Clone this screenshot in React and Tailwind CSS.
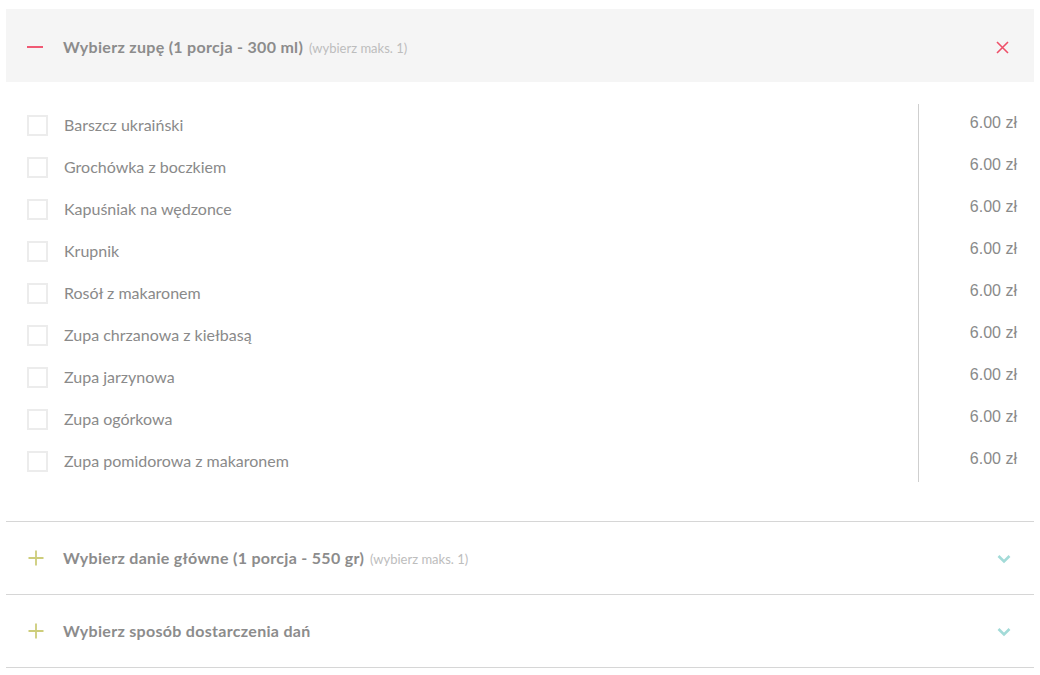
import React from "react";

const soups = [
  "Barszcz ukraiński",
  "Grochówka z boczkiem",
  "Kapuśniak na wędzonce",
  "Krupnik",
  "Rosół z makaronem",
  "Zupa chrzanowa z kiełbasą",
  "Zupa jarzynowa",
  "Zupa ogórkowa",
  "Zupa pomidorowa z makaronem",
];

function PlusIcon() {
  return (
    <svg width="16" height="16" viewBox="0 0 16 16" className="shrink-0">
      <path d="M8 0.5v15M0.5 8h15" stroke="#cdcd7a" strokeWidth="1.8" fill="none" />
    </svg>
  );
}

function Chevron() {
  return (
    <svg width="14" height="10" viewBox="0 0 14 10" className="shrink-0 mt-[2px]">
      <path d="M1.5 2l5.5 5.5L12.5 2" stroke="#a3dbd8" strokeWidth="2.6" fill="none" />
    </svg>
  );
}

function ClosedSection({ title, note }) {
  return (
    <div className="h-[73px] flex items-center pl-[22px] pr-[23px] border-b border-[#d6d6d6]">
      <PlusIcon />
      <div className="ml-[19px] flex-1 flex items-baseline">
        <span className="text-[16px] font-bold tracking-[0.3px] text-[#8c8c8c]">{title}</span>
        {note && <span className="ml-[6px] text-[13px] text-[#bdbdbd]">{note}</span>}
      </div>
      <Chevron />
    </div>
  );
}

export default function App() {
  return (
    <div className="min-h-screen bg-white px-[6px] pt-[9px]" style={{ fontFamily: "Lato, 'Open Sans', sans-serif" }}>
      {/* Open section */}
      <div className="h-[73px] bg-[#f5f5f5] flex items-center pl-[21px] pr-[25px]">
        <svg width="16" height="4" viewBox="0 0 16 4" className="shrink-0 mt-[3px]">
          <path d="M0 2h16" stroke="#f05a74" strokeWidth="2" />
        </svg>
        <div className="ml-[20px] flex-1 flex items-baseline mt-[2px]">
          <span className="text-[16px] font-bold tracking-[0.3px] text-[#8c8c8c]">Wybierz zupę (1 porcja - 300 ml)</span>
          <span className="ml-[6px] text-[13px] text-[#bdbdbd]">(wybierz maks. 1)</span>
        </div>
        <svg width="13" height="13" viewBox="0 0 13 13" className="shrink-0 mt-[3px]">
          <path d="M1 1l11 11M12 1L1 12" stroke="#ee5069" strokeWidth="1.6" fill="none" />
        </svg>
      </div>

      <div className="flex pt-[22px] pb-[39px] border-b border-[#d6d6d6]">
        <div className="flex-1 pl-[21px]">
          {soups.map((s) => (
            <label key={s} className="h-[42px] flex items-center">
              <span className="w-[21px] h-[21px] border-2 border-[#ececec] bg-white shrink-0" />
              <span className="ml-[16px] text-[16px] text-[#8a8a8a]">{s}</span>
            </label>
          ))}
        </div>
        <div className="w-[116px] border-l border-[#cfcfcf] pr-[17px]">
          {soups.map((s) => (
            <div
              key={s}
              className="h-[42px] flex items-center justify-end pb-[5px] text-[16px] text-[#8a8a8a]"
              style={{ fontFamily: "'Liberation Sans', Arial, sans-serif" }}
            >
              6.00 zł
            </div>
          ))}
        </div>
      </div>

      <ClosedSection title="Wybierz danie główne (1 porcja - 550 gr)" note="(wybierz maks. 1)" />
      <ClosedSection title="Wybierz sposób dostarczenia dań" />
    </div>
  );
}
